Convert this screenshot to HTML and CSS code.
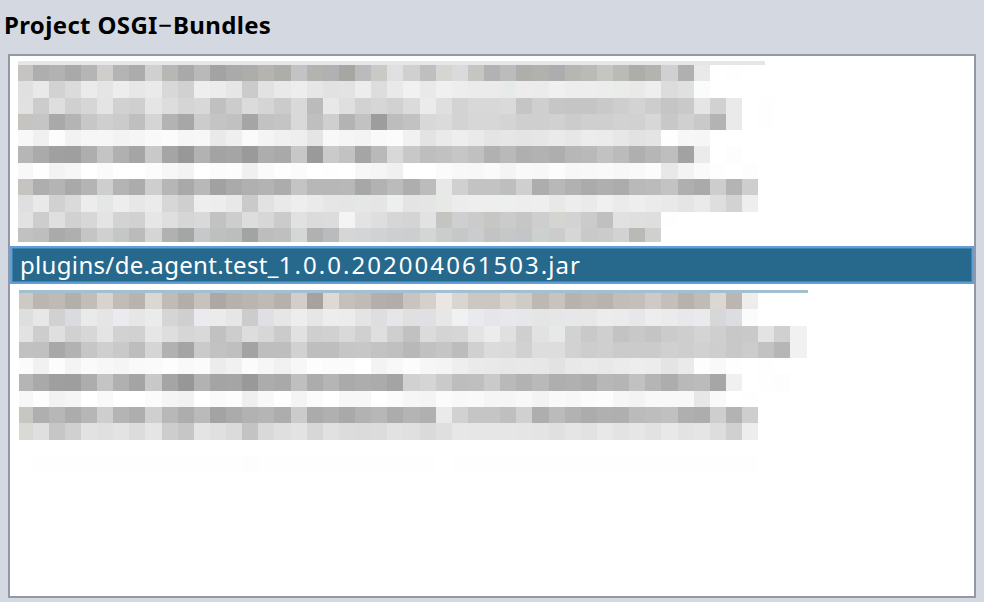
FILE: index.html
```html
<!DOCTYPE html>
<html lang="en">
<head>
<meta charset="utf-8">
<title>Project OSGI-Bundles</title>
<link rel="stylesheet" href="styles.css">
</head>
<body>
<main class="panel">
<h1 class="title">Project OSGI<span class="dash">−</span>Bundles</h1>
<div class="list">
<div class="mosaic mosaic-top" id="top"><div class="strip"></div></div>
<div class="selected">plugins/de.agent.test_<span class="version">1.0.0.202004061503</span><span class="ext">.jar</span></div>
<div class="mosaic mosaic-bottom" id="bottom"><div class="strip"></div></div>
</div>
</main>
<script src="mosaic.js"></script>
</body>
</html>
```
FILE: styles.css
```css
* { box-sizing: border-box; }
html, body { height: 100%; margin: 0; }
body { background: #d4d8e0; overflow: hidden; }
.panel { height: 602px; padding: 0 8px 4px; display: flex; flex-direction: column; }
.title { margin: 0 0 0 -4px; height: 54px; padding-top: 8px; font: bold 24px/34px "Noto Sans", "Open Sans", sans-serif; letter-spacing: 0.35px; color: #000; white-space: nowrap; }
.dash { font-weight: 500; margin: 0 0.5px; }
.list { flex: 1; background: #fff; border: 2px solid #9298a5; }
.mosaic-top { height: 190px; padding: 5px 0 0 8px; }
.mosaic-bottom { padding: 6px 0 0 9px; }
.strip { height: 4px; width: 747px; background: #e4e6e9; }
.mosaic-bottom .strip { height: 3px; width: 789px; background: #a3c0d1; }
.row { display: flex; height: 16.3px; }
.mosaic-top .row:last-child { height: 14px; }
.cell { flex: none; width: 16.125px; }
.mosaic-top .cell:first-child { width: 14.5px; }
.mosaic-bottom .cell:first-child { width: 13.5px; }
.selected { height: 38px; border: 2px solid #61a0d7; box-shadow: inset 0 0 0 1px #4181ae; background: #27698d; color: #fff; padding-left: 8px; font: 24px/34px "Noto Sans", "Open Sans", sans-serif; letter-spacing: 0.33px; white-space: nowrap; }
.version { letter-spacing: 2.05px; }
.ext { letter-spacing: 1px; }
```
FILE: mosaic.js
```js
// Shades per cell: two digits are a grey level, six digits a full colour.
const blocks = {
  top: [
    "c5c4c2 ae b2 a9 b5 cfcecb b4 ac d0 b7b7b4 a9 b9 a3 aa adadaa b5b4b1 adada9 c3 b3b3b0 b1 a6a6a3 bb c9c9c6 e0 d0 bf d5d5d1 da c5c5c2 b2 bc aeaeab b1b1ae ad b6b6b3 babab7 c5c5c2 babab7 adadaa b3b3b0 d0 b0b0ae e9 ff fe",
    "e0 e9 d2 db eb e5 ed e7 ea d8 d1 ee ec e6 cb e2 e9 ed e6 e2 e3 ed dd e9 f1 e9 f0 ed eb eb e6eae8 ec eb f0 ed ed ec eaecea e9 ee dc e0 fafcfb",
    "e1 cc de d0 d6 e4 d1 cf e5 dd d5 d8 c0 cc db d5 cb d9 bb e8 df d2 d6 d1 db eb df d3 d8 d8 da c5 cf c6 c5 c5 c9 ce d3 cd c5 c9 e5 d1 ea ff fe",
    "c5c4c1 c5 a9 b4 c7 cf cb bf d5 b3 a7 cc c4 c1 a5 c2 c4 d9 bf cf b3 c2 9d bd c2 d8 db d3 d7 d7 d4 cf cf d1 cc cf cf d2 d1 d7 c8 d0 c9 b3 ea ff fe",
    "f8 f0 fc f2 f6 f6 f3 f5 f9 fb f6 f7 e9 ef fa f4 f0 ee e5 f8 f5 f3 f9 fb f1 e3 ea ee ea e4 e6 e4 e6 ea e7 ec eb e7 e2 e4 fe f7 f6",
    "b6 aa a0 9f ae c4 b0 a5 c9 a5 98 b2 a3 a5 9a ad a9 c7 9a ca c2 a5 b9 d8 c8 be c1 c6 c0 b1 b9 af b2 ae b7 b9 c2 bb af b6 be a2 eb ff fd",
    "f8 fe f3 f6 ff fa ff ff fc f7 f3 ff fb fc f0 fa fe fb ff fe ff f7 f5 f0 ff ff fb f8 f7 fa f4 f9 f7 fc f7 f8 f9 f7 f9 fc e8 f3 fa fe ff fd",
    "c5c4c1 ae b4 a9 b4 ce b4 ac ce b6 a9 b8 a1 aa b0 b3 ac c4 b7 b7 b8 a7 b2 bb ae bc e8 d0 c3 c3 be cf ad b8 b1 ab af ac b9 bb c3 af aa cd b4 ce",
    "df e9 d1 da ec e4e7e6 ed e7 eb d7 cf ee ed e8 ca e2 e9 ee ea e6 e5 e4e7e5 e5 ecefed e4 e5 e7e9e7 ec ee ee ecefee ed ee e8 ebeeed ea f0 eb ee eb e8eae9 e5 ea de d2 ee",
    "e2 cd df d1 d7 e4 d3 d1 e6 df d6 d9 c2 cd dd d7 cb e1 db dc f4 e3 de d6 d4 e2 c4c4c1 cf cb c6c6c3 cb c6 ce d4d4d0 d3 cb c0 e1 df dededc fe",
    "c1 be aa af c5 d0 c5c7c7 bb d5 b1 a4a6a5 c6c8ca bdc0bf bbbebd a1a4a3 bd bf d4d7d6 b1 babbbd d6 d4d5d7 d1d2d4 cecfd1 cdcecf d4d6d5 cbcdcc c6c7c9 cbccce c3 c6c7c9 c4c5c8 ccd0cf cc d6 c9 cb d2 b9b9b6 d0"
  ],
  bottom: [
    "cfc9c5 bbb6b2 bfbab6 b3afab c2bdb9 d8d3cf c1bcb8 b8b3af dbd7d3 c1bbb7 b3aeaa c7c2be ada8a5 b6b1ad bab5b1 bfbab6 b6b1ad d3cecb a7a29e ded9d5 c5c0bc c0bbb7 b4afac b2adaa cac4c0 d5d0cc ebe6e4 d9d5d1 ccc7c3 ccc7c3 d8d3cf cfcbc7 bdb8b4 c8c3bf b7b2ae bcb7b3 b9b3af c2bdb9 c5bfbc cfcac7 c4bfbb b8b2af c0bbb7 dbd7d3 bcb5b2 eeedec",
    "dcdfdd e5e8e7 cfd1d2 d9dbde e9ebea e3e6e4 e9ebee e4e7e5 e9eceb d5 cecfd1 e9ebee e9eceb e4e7e6 cacdcb dfe0e3 e4e7e5 eceeed e4e7e5 eceeed eaedec e2e5e4 dcdee0 e4e6ea e0 dee0e3 e5e8e6 f0f2f1 e8eaed e5e6e9 e6e8eb e6e7ea e3e6e4 e4e7e5 e6e7ea e8e7e7 ebedec eb e6e7eb ed eaeceb e6e8eb e8eaec d5d7d9 dbdde0 fafcfb",
    "e2 cd df d1 d7 e4 d2 d1 e6 de d6 d9 c1 cd dd d7 cb e1 cf d1 d9 d0 df cf c1 db d4 d6 e4 ec e0 cf e2 e6e9e7 d2 c9 cf c3 c8 c4 cb ce d4 cf c8 c9 e3 d0 f1",
    "c1 c0 a8 b2 c6 cf c9 bd d5 b1 a4 ca c2 bf a3 be be d1 be be c6 c7 c3 c0 b8 c1 c5 bc d0 db da d1 dd dd d2 cd cf cb cb cb d0 ce d1 ce c8 cc c2 b6 f1",
    "fbfbf9 f1 fc f4 fa f7 f5 f9 fa fd f9 fb ec f1 fb f6 f1 f7 fd fb fb ff f3 f8 fc f6 f4 ee ea e9 e7 e8 e7 e2 e8 ea e8 eb ed ec e4 ea fd f9 fe ff fe",
    "b5 a9 9f 9e ad c4 b0 a4 c8 a5 97 b2 a4 a5 99 ac a9 bf ac b5 aa ad ab a4 d1 d5 ca bd bf ca b9 b2 b9 ae b0 ac b7 b5 c1 b5 ad b9 bb a6 f0 ff fe fd",
    "f7 fd f2 f5 ff f9 ff ff fb f5 f2 ff fa fc ef f8 fe f4 fb ff f7 f7 ff fb f6 f4 fb f8 f9 f5 f5 f8 f3 f9 f7 fb fc f6 f3 f8 f8 f8 e7 f9 ff fe",
    "c6c6c3 af b7 ac b6 ce b4 ae cf b8 ad ba a3 ab b2 b5 ad cb ab b0 a9 b2 b7 ac b4 b0 ea d1 c5 c5 bf d0 ae bb b2 ac b0 af bb bd c0 af ad ce b3 ce",
    "d9d9d6 df c6 d0 e2 e0 e3 dc e5 cd c6 e4 e0 db c3 d9 df e3 d7 e1 dc db dc e2 e0 da df e7 e6 e6 e6 e5 e4 e0 e5 e2 e8 e3 e6 e2 e8 e3 e5 dd d0 ed",
    "",
    "ff fe fe fe fe fe fe fe fe fe fe fe fe fe fd fe fe fe fe fe fe fe fe fe fe fe ff fe fe fe fe fe fe fe fe fe fe fe fe fe fe fe fe fe fe fe"
  ]
};
for (const [id, rows] of Object.entries(blocks)) {
  const host = document.getElementById(id);
  for (const line of rows) {
    const row = document.createElement("div");
    row.className = "row";
    for (const shade of line.split(" ").filter(Boolean)) {
      const cell = document.createElement("div");
      cell.className = "cell";
      cell.style.background = "#" + (shade.length === 2 ? shade.repeat(3) : shade);
      row.append(cell);
    }
    host.append(row);
  }
}
```
